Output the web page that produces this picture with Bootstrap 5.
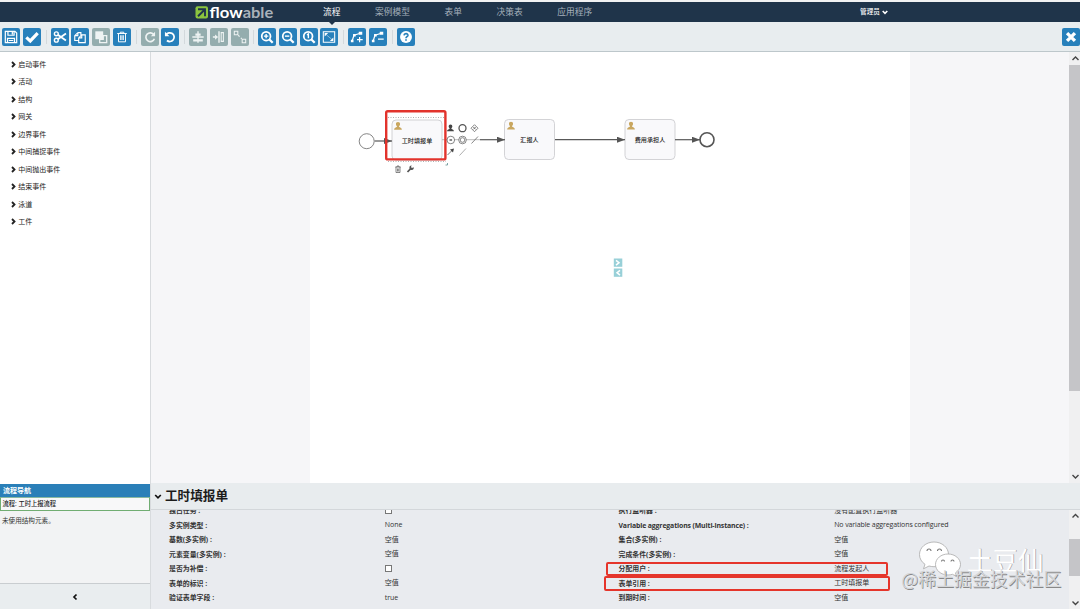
<!DOCTYPE html>
<html lang="zh-CN">
<head>
<meta charset="utf-8">
<title>Flowable</title>
<link href="https://cdn.jsdelivr.net/npm/bootstrap@5.3.0/dist/css/bootstrap.min.css" rel="stylesheet">
<style>
body{font-family:"Open Sans","Noto Sans CJK SC",sans-serif;font-size:7px;line-height:1;color:#222;background:#fff;width:1080px;height:609px;overflow:hidden}
.app-shell{height:609px;border-top:2px solid #f1f2f3}
.topnav{height:20px;flex:none;background:#1f344a;color:#a6b1bc;font-size:8.7px;padding:0}
.brand-mark{width:80px;height:18px;margin-left:195px}
.menu-link{position:relative;white-space:nowrap;line-height:21px;color:inherit;text-decoration:none}
.menu-link.active{color:#fff}
.menu-link.active::after{content:"";position:absolute;left:50%;top:20px;margin-left:-3px;border:3px solid transparent;border-top-color:#1f344a}
.menu{margin-left:48px;gap:34.7px}
.user-menu{font-size:6.6px;color:#fff;font-weight:500;margin-left:268px;gap:2px;padding-top:1px}
.tools{height:30px;flex:none;background:#e8edef;border-bottom:1px solid #bdc7cb;padding:0 0 0 2.3px;gap:9.8px}
.tool-group{gap:2.7px;position:relative}
.tool-group+.tool-group::before{content:"";position:absolute;left:-5px;top:2px;height:14px;border-left:1px solid #d3d9dc}
.tool{width:18px;height:18px;padding:0;border:0;border-radius:2px;background:#2780bb;color:#fff;display:flex;align-items:center;justify-content:center}
.tool.off{background:#94adae;color:#eef3f3}
.tool svg{width:14px;height:14px}
svg.ic{fill:none;stroke:currentColor;stroke-width:1.6}
.side{width:151px;flex:none;border-right:1px solid #d8dbde}
.palette{height:432px;padding:3.6px 0 0 11px;background:#fff}
.palette-item{height:17.53px;gap:2.2px;color:#222;white-space:nowrap}
.nav-head{height:12.5px;background:#2a7fb8;color:#fff;font-weight:700;font-size:7px;padding:3px 3px}
.nav-process{height:14px;border:1px solid #71ad72;border-top-color:#8ab9a0;background:#f8f8f9;padding:3px 1.5px;font-size:6.3px;font-weight:500;color:#222}
.nav-body{background:#f2f3f4;padding:7.5px 2px;font-size:6.6px;color:#333}
.side-foot{height:26px;background:#e9edef;border-top:1px solid #c9cdd0}
.canvas-zone{height:431px;flex:none;background:#f6f6f8}
.drawing{width:918px;height:431px;flex:none;font-family:"Noto Sans CJK SC",sans-serif}
.drawing .lbl{font-size:6.1px;font-weight:500;fill:#222;text-anchor:middle}
.sbar{width:11px;flex:none;background:#f0f0f1;color:#444}
.sbar svg{width:11px;height:13px;display:block;flex:none}
.thumb{background:#c5c5c8;width:100%}
.prop-head{height:26.5px;flex:none;background:#e8ecee;border-bottom:1.5px solid #d3d7da;padding:1.500px 0 0 3px;gap:3px;font-size:12.6px;font-weight:700;color:#1b1b1b}
.props{background:#e9ebef;overflow:hidden;min-height:0}
.prop-grid{margin-top:-6px;padding-left:18px;overflow:hidden}
.prop-half{width:449.5px;flex:none}
.prop{height:14.5px;position:relative;white-space:nowrap}
.prop>b{width:215.7px;font-weight:700;font-size:6.9px;color:#333;padding-top:2px}
.prop>span{font-size:7px;color:#333;padding-bottom:.6px}
.latin>b{letter-spacing:-.12px}
.latin>span{letter-spacing:-.11px}
.chk{width:7px;height:7px;border:1px solid #777;background:#fff}
.hot::after{content:"";position:absolute;left:-13px;width:282.5px;top:.5px;height:14px;border:2px solid #e5352b;border-radius:2px}
.hot.wide::after{left:-14.5px;width:286px;top:0;height:15px}
.wm{position:absolute;right:0;bottom:0;width:190px;height:75px}
.wm-name{text-shadow:.8px .8px 0 #a0a0a0}
.wm-site{text-shadow:.8px .8px 0 #888}
</style>
</head>
<body>
<svg width="0" height="0" class="position-absolute">
 <defs>
  <symbol id="chev" viewBox="0 0 6 8"><path d="M1.2 1 4.2 4 1.2 7" fill="none" stroke="currentColor" stroke-width="2.200"/></symbol>
  <symbol id="person" viewBox="0 0 10 10"><path d="M5 .5c1.500 0 2.300 1 2.300 2.400S6.500 5 6 5.600c0 .9 3.300 1 3.300 3.600H.7C.7 6.600 4 6.500 4 5.600 3.500 5 2.700 4.300 2.700 2.900S3.500.5 5 .5z"/></symbol>
  <marker id="arr" markerWidth="9" markerHeight="6" refX="8" refY="3" orient="auto" markerUnits="userSpaceOnUse"><path d="M0 0 8 3 0 6z" fill="#555"/></marker>
 </defs>
</svg>
<div class="app-shell d-flex flex-column">
 <nav class="topnav d-flex align-items-center">
  <svg class="brand-mark" viewBox="0 0 80 18">
   <rect x="0.500" y="3.200" width="12.500" height="12.300" rx="2" fill="#8bc53f"/>
   <path d="M3 6.300h7v7M9.600 6.700 3 13.200" fill="none" stroke="#1f344a" stroke-width="1.900"/>
   <text x="14.500" y="15" font-family="Lato" font-weight="700" font-size="15.500" fill="#fff" textLength="33" lengthAdjust="spacingAndGlyphs">flow</text>
   <text x="47.700" y="15" font-family="Lato" font-weight="700" font-size="15.500" fill="#a9b1ba" textLength="30.500" lengthAdjust="spacingAndGlyphs">able</text>
  </svg>
  <div class="menu d-flex">
   <a class="menu-link active">流程</a><a class="menu-link">案例模型</a><a class="menu-link">表单</a><a class="menu-link">决策表</a><a class="menu-link">应用程序</a>
  </div>
  <div class="user-menu d-flex align-items-center"><span>管理员</span><svg width="6" height="5" viewBox="0 0 6 5"><path d="M.7 1 3 3.300 5.300 1" fill="none" stroke="#fff" stroke-width="1.600"/></svg></div>
 </nav>

 <div class="tools d-flex align-items-center">
  <div class="tool-group d-flex">
   <button class="tool"><svg class="ic" viewBox="0 0 16 16"><path d="M1.500 1.500h11l2 2v11h-13zM4.500 1.500v4.500h7v-4.500M4 14.500V9.500h8v5M9.500 2v3M5.500 12h5" stroke-width="1.400"/></svg></button>
   <button class="tool"><svg class="ic" viewBox="0 0 16 16"><path d="M1.500 8.500 6 12.500 14.500 3.500" stroke-width="3.600"/></svg></button>
  </div>
  <div class="tool-group d-flex">
   <button class="tool"><svg class="ic" viewBox="0 0 16 16"><circle cx="3.800" cy="4.300" r="2.200"/><circle cx="3.800" cy="11.700" r="2.200"/><path d="M5.500 5.500 14.800 12M5.500 10.500 14.800 4" stroke-width="2.100"/></svg></button>
   <button class="tool"><svg class="ic" viewBox="0 0 16 16"><path d="M5.500 3 2 6.500V12h4M5.500 3H9v3M5.500 3v3.500H2M10 5.500 6.500 9v5.500H14v-9zM10 5.500V9H6.500" stroke-width="1.300"/></svg></button>
   <button class="tool off"><svg class="ic" viewBox="0 0 16 16"><path d="M1.500 1.500h9v9h-9z" fill="currentColor" stroke="none"/><path d="M6.500 6.500h8v8h-8z" fill="#94adae" stroke-width="1.500"/><path d="M6.500 6.500h4v4h-4z" fill="currentColor"/></svg></button>
   <button class="tool"><svg class="ic" viewBox="0 0 16 16"><path d="M2.500 4h11M6 4V2.500h4V4M4 4v9.500h8V4M6.500 6v5.500M8 6v5.500M9.500 6v5.500" stroke-width="1.100"/></svg></button>
  </div>
  <div class="tool-group d-flex">
   <button class="tool off"><svg class="ic" viewBox="0 0 16 16"><path d="M12.500 5.500A5 5 0 1 0 13 10" stroke-width="1.900"/><path d="M13.800 2v5H9z" fill="currentColor" stroke="none"/></svg></button>
   <button class="tool"><svg class="ic" viewBox="0 0 16 16"><path d="M3.500 5.500A5 5 0 1 1 4.500 12" stroke-width="2"/><path d="M2.200 2v5.200H7.400z" fill="currentColor" stroke="none"/></svg></button>
  </div>
  <div class="tool-group d-flex">
   <button class="tool off"><svg class="ic" viewBox="0 0 16 16"><path d="M8 1.500v13M1.500 8h13"/><path d="M5 4h6v2.500H5zM2.500 10.500h11V13h-11z" fill="currentColor" stroke="none"/></svg></button>
   <button class="tool off"><svg class="ic" viewBox="0 0 16 16"><path d="M1 8h3M8 1.500v13"/><path d="M3.500 5 7 8 3.500 11z" fill="currentColor" stroke="none"/><path d="M10.500 3H13v10h-2.500z" stroke-width="1.200"/></svg></button>
   <button class="tool off"><svg class="ic" viewBox="0 0 16 16"><path d="M1.500 5.500v-4h4v4zM10.500 14.500v-4h4v4z" stroke-width="1.200"/><path d="m6 6 1.500 1.500M9 9l1 1" stroke-width="1.300"/></svg></button>
  </div>
  <div class="tool-group d-flex">
   <button class="tool"><svg class="ic" viewBox="0 0 16 16"><circle cx="7" cy="7" r="5" stroke-width="2"/><path d="m10.500 10.500 4 4" stroke-width="2.600"/><path d="M4.500 7h5M7 4.500v5"/></svg></button>
   <button class="tool"><svg class="ic" viewBox="0 0 16 16"><circle cx="7" cy="7" r="5" stroke-width="2"/><path d="m10.500 10.500 4 4" stroke-width="2.600"/><path d="M4.500 7h5"/></svg></button>
   <button class="tool"><svg class="ic" viewBox="0 0 16 16"><circle cx="7" cy="7" r="5" stroke-width="2"/><path d="m10.500 10.500 4 4" stroke-width="2.600"/><path d="M5.700 5.500 7.300 4.500v5"/></svg></button>
   <button class="tool"><svg class="ic" viewBox="0 0 16 16"><path d="M1.500 2h13v12h-13z" stroke-width="1.200"/><path d="m5 5.500 6 5" stroke-width="1" opacity=".5"/><path d="M3 3.500h4l-4 4zM13 12.500H9l4-4z" fill="currentColor" stroke="none"/></svg></button>
  </div>
  <div class="tool-group d-flex">
   <button class="tool"><svg class="ic" viewBox="0 0 16 16"><path d="M2.500 12.500 4.500 6 11 4M11 8v6M8 11h6.500" stroke-width="1.400"/><path d="M1 11h3v3H1zM3.500 4.500h3v3h-3zM10 2h4v3.500h-4z" fill="currentColor" stroke="none"/></svg></button>
   <button class="tool"><svg class="ic" viewBox="0 0 16 16"><path d="M2.500 12.500 4.500 6 11 4M8 10.500h6.500" stroke-width="1.400"/><path d="M1 11h3v3H1zM3.500 4.500h3v3h-3zM10 2h4v3.500h-4z" fill="currentColor" stroke="none"/></svg></button>
  </div>
  <div class="tool-group d-flex">
   <button class="tool"><svg viewBox="0 0 16 16"><circle cx="8" cy="8" r="6.800" fill="#fff"/><path d="M5.700 6.200C6 3.300 10.400 3.700 10.200 6.200 10 7.700 8 7.600 8 9.300M8 10.500v1.900" fill="none" stroke="#2780bb" stroke-width="1.900"/></svg></button>
  </div>
  <button class="tool ms-auto"><svg class="ic" viewBox="0 0 16 16"><path d="m3.500 3.500 9 9m0-9-9 9" stroke-width="3.800"/></svg></button>
 </div>

 <div class="d-flex flex-grow-1" style="min-height:0">
  <aside class="side d-flex flex-column">
   <div class="palette">
    <div class="palette-item d-flex align-items-center"><svg width="5" height="7"><use href="#chev"/></svg>启动事件</div>
    <div class="palette-item d-flex align-items-center"><svg width="5" height="7"><use href="#chev"/></svg>活动</div>
    <div class="palette-item d-flex align-items-center"><svg width="5" height="7"><use href="#chev"/></svg>结构</div>
    <div class="palette-item d-flex align-items-center"><svg width="5" height="7"><use href="#chev"/></svg>网关</div>
    <div class="palette-item d-flex align-items-center"><svg width="5" height="7"><use href="#chev"/></svg>边界事件</div>
    <div class="palette-item d-flex align-items-center"><svg width="5" height="7"><use href="#chev"/></svg>中间捕捉事件</div>
    <div class="palette-item d-flex align-items-center"><svg width="5" height="7"><use href="#chev"/></svg>中间抛出事件</div>
    <div class="palette-item d-flex align-items-center"><svg width="5" height="7"><use href="#chev"/></svg>结束事件</div>
    <div class="palette-item d-flex align-items-center"><svg width="5" height="7"><use href="#chev"/></svg>泳道</div>
    <div class="palette-item d-flex align-items-center"><svg width="5" height="7"><use href="#chev"/></svg>工件</div>
   </div>
   <div class="nav-head">流程导航</div>
   <div class="nav-process">流程: 工时上报流程</div>
   <div class="nav-body flex-grow-1">未使用结构元素。</div>
   <div class="side-foot d-flex align-items-center justify-content-center"><svg width="6" height="8" viewBox="0 0 6 8"><path d="M4.500 1.500 2 4l2.500 2.500" fill="none" stroke="#111" stroke-width="1.700"/></svg></div>
  </aside>

  <main class="d-flex flex-column flex-grow-1 position-relative" style="min-width:0">
   <section class="canvas-zone d-flex">
    <svg class="drawing" viewBox="151 52 918 431">
     <rect x="310" y="52" width="600" height="431" fill="#fff"/>
     <g fill="#f9f9fb" stroke="#c8c8cc" stroke-width=".8">
      <rect x="392" y="120" width="50" height="40" rx="4"/><rect x="504.500" y="119.500" width="50" height="40" rx="4"/><rect x="625" y="119.500" width="50" height="40" rx="4"/>
     </g>
     <g stroke="#585858" stroke-width="1.200">
      <path d="M374.500 141H392" marker-end="url(#arr)"/><path d="M480 139.700H505" marker-end="url(#arr)"/><path d="M555 139.700H625" marker-end="url(#arr)"/><path d="M675 139.700H700" marker-end="url(#arr)"/>
     </g>
     <path d="M442 139.700H480" stroke="#aaa" stroke-width=".8"/>
     <circle cx="366.700" cy="141.200" r="7.500" fill="#fff" stroke="#777" stroke-width=".9"/>
     <circle cx="707" cy="139.700" r="7" fill="#fff" stroke="#555" stroke-width="1.600"/>
     <g fill="#c9a760"><use href="#person" x="393.500" y="121.500" width="9" height="9"/><use href="#person" x="506.500" y="121.200" width="9" height="9"/><use href="#person" x="626.500" y="121.200" width="9" height="9"/></g>
     <text class="lbl" x="417" y="142.500">工时填报单</text><text class="lbl" x="529.500" y="142.200">汇报人</text><text class="lbl" x="650" y="142.200">费用承担人</text>
     <path d="M388 117.500h58M388 161.500h58" stroke="#999" stroke-width=".8" stroke-dasharray="1 1.500"/>
     <rect x="386.200" y="111.200" width="59.200" height="48.200" rx="1.500" fill="none" stroke="#e2332c" stroke-width="2.400"/>
     <use href="#person" x="446.500" y="124" width="8" height="8" fill="#444"/>
     <g fill="none" stroke="#555">
      <circle cx="462.500" cy="128.200" r="3.500" stroke-width="1.300"/>
      <path d="m474.500 124.700 3.500 3.500-3.500 3.500-3.500-3.500z" stroke-width=".7"/><path d="m473.300 127 2.400 2.400m0-2.400-2.400 2.400" stroke-width=".8"/>
      <circle cx="450.800" cy="140" r="3.800" fill="#fff" stroke-width=".7"/><path d="M449.500 140h2.600" stroke-width="1.400"/>
      <circle cx="462.500" cy="140" r="3.800" fill="#fff" stroke-width=".7"/><circle cx="462.500" cy="140" r="2.300" stroke-width=".7"/>
      <path d="m471.500 143.500 6.500-7" stroke-width=".7"/>
      <path d="m447.500 155 5-5" stroke-width=".8"/><path d="m454 148.500-1 4-3-3z" fill="#444" stroke="none"/>
      <path d="m459.500 155.500 6.500-7" stroke-width=".6" stroke="#777"/>
      <path d="M395.300 167h5.400M397 167v-1h2v1M396 167v5.500h4V167M397.500 168.500v3M398.700 168.500v3" stroke-width=".7"/>
      <path d="m407.500 172 3.200-3.400" stroke-width="1.700"/><path d="M413.700 167.200a2.200 2.200 0 1 1-2-1.700l-.7 1.500.9.900z" fill="#555" stroke="none"/>
      <path d="M445.500 165h2v-2" stroke="#5f9091" stroke-width=".8"/>
     </g>
     <g fill="#98d0d8"><rect x="613.800" y="258.500" width="8.500" height="8.300"/><rect x="613.800" y="268.500" width="8.500" height="8.300"/></g>
     <path d="m616 260.300 3 2.400-3 2.400M620 270.300l-3 2.400 3 2.400" fill="none" stroke="#fff" stroke-width="1.500"/>
    </svg>
    <div class="sbar d-flex flex-column">
     <svg viewBox="0 0 11 13"><path d="m3.500 8 3-3 3 3" fill="none" stroke="currentColor" stroke-width="1.400"/></svg>
     <div class="thumb" style="height:326px"></div>
     <svg class="mt-auto" viewBox="0 0 11 13"><path d="m3.500 5 3 3 3-3" fill="none" stroke="currentColor" stroke-width="1.400"/></svg>
    </div>
   </section>
   <header class="prop-head d-flex align-items-center"><svg width="8" height="7" viewBox="0 0 8 7"><path d="m1.200 2 2.800 2.800L6.800 2" fill="none" stroke="#111" stroke-width="1.700"/></svg>工时填报单</header>
   <section class="props d-flex flex-grow-1">
    <div class="prop-grid d-flex flex-grow-1">
     <div class="prop-half">
      <div class="prop d-flex align-items-center"><b>独占任务 :</b><i class="chk"></i></div>
      <div class="prop d-flex align-items-center"><b>多实例类型 :</b><span>None</span></div>
      <div class="prop d-flex align-items-center"><b>基数(多实例) :</b><span>空值</span></div>
      <div class="prop d-flex align-items-center"><b>元素变量(多实例) :</b><span>空值</span></div>
      <div class="prop d-flex align-items-center"><b>是否为补偿 :</b><i class="chk"></i></div>
      <div class="prop d-flex align-items-center"><b>表单的标识 :</b><span>空值</span></div>
      <div class="prop d-flex align-items-center"><b>验证表单字段 :</b><span>true</span></div>
     </div>
     <div class="prop-half">
      <div class="prop d-flex align-items-center"><b>执行监听器 :</b><span>没有配置执行监听器</span></div>
      <div class="prop latin d-flex align-items-center"><b>Variable aggregations (Multi-instance) :</b><span>No variable aggregations configured</span></div>
      <div class="prop d-flex align-items-center"><b>集合(多实例) :</b><span>空值</span></div>
      <div class="prop d-flex align-items-center"><b>完成条件(多实例) :</b><span>空值</span></div>
      <div class="prop hot d-flex align-items-center"><b>分配用户 :</b><span>流程发起人</span></div>
      <div class="prop hot wide d-flex align-items-center"><b>表单引用 :</b><span>工时填报单</span></div>
      <div class="prop d-flex align-items-center"><b>到期时间 :</b><span>空值</span></div>
     </div>
    </div>
    <div class="sbar d-flex flex-column">
     <svg viewBox="0 0 11 13"><path d="m3.500 7.500 3-3 3 3" fill="none" stroke="currentColor" stroke-width="1.400"/></svg>
     <div class="thumb" style="height:37px;margin-top:16px"></div>
     <svg class="mt-auto" viewBox="0 0 11 13"><path d="m3.500 5.500 3 3 3-3" fill="none" stroke="currentColor" stroke-width="1.400"/></svg>
    </div>
   </section>
   <svg class="wm" viewBox="890 534 190 75" font-family="Noto Sans CJK SC">
    <g stroke="#aaa" stroke-width=".8" fill="#fff">
     <path d="M934 542c-8 0-14.500 5.500-14.500 12.500 0 4 2 7.500 5.500 9.800l-1.500 4.500 5.500-2.800c2 .5 3.500.7 5 .7 8 0 14.500-5.200 14.500-12.200S942 542 934 542z"/>
     <path d="M948 554c-7 0-12.500 4.700-12.500 10.500S941 575 948 575c1.500 0 3-.2 4.500-.7l4 2.200-1-3.700c3-2 5-5 5-8.300 0-5.800-5.500-10.500-12.500-10.500z"/>
    </g>
    <path d="M927 551a2 2 0 0 1 4 0M937.500 551a2 2 0 0 1 4 0M941.500 561.500a1.500 1.500 0 0 1 3 0M951 561.500a1.500 1.500 0 0 1 3 0" fill="none" stroke="#777" stroke-width="1.100"/>
    <text class="wm-name" x="967" y="569.500" font-size="25.500" fill="#fff">土豆仙</text>
    <text class="wm-site" x="901.300" y="586.300" font-size="18" fill="#d4d6d9" textLength="160" lengthAdjust="spacingAndGlyphs">@稀土掘金技术社区</text>
   </svg>
  </main>
 </div>
</div>
<script src="https://cdn.jsdelivr.net/npm/bootstrap@5.3.0/dist/js/bootstrap.bundle.min.js"></script>
</body>
</html>
